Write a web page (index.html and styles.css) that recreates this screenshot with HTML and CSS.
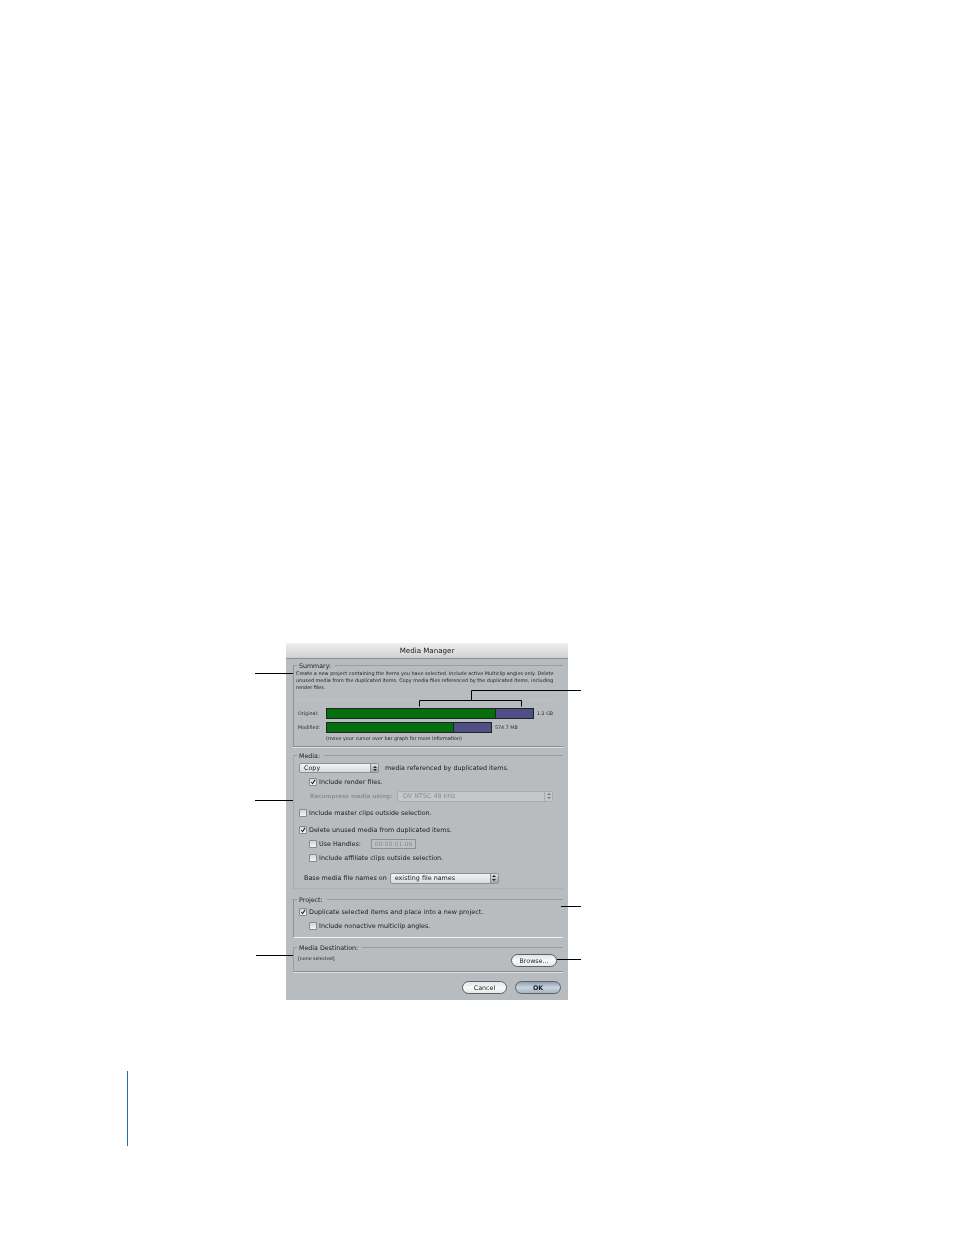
FILE: index.html
```html
<!DOCTYPE html>
<html lang="en">
<head>
<meta charset="utf-8">
<title>Media Manager</title>
<link rel="stylesheet" href="styles.css">
</head>
<body>
<main class="page">
  <section class="dialog">
    <header class="titlebar">Media Manager</header>

    <div class="group group-summary">
      <div class="head"><span class="head-label">Summary:</span></div>
      <p class="summary-text">Create a new project containing the items you have selected. Include active Multiclip angles only. Delete unused media from the duplicated items. Copy media files referenced by the duplicated items, including render files.</p>
      <div class="sep"></div>
      <div class="bar-row bar-row-first">
        <span class="bar-label">Original:</span>
        <div class="bar bar-original"><div class="bar-green" style="width:81.5%"></div><div class="bar-blue"></div></div>
        <span class="bar-value">1.2 GB</span>
      </div>
      <div class="bar-row">
        <span class="bar-label">Modified:</span>
        <div class="bar bar-modified"><div class="bar-green" style="width:77%"></div><div class="bar-blue"></div></div>
        <span class="bar-value">574.7 MB</span>
      </div>
      <p class="hint">(move your cursor over bar graph for more information)</p>
    </div>

    <div class="group group-media">
      <div class="head"><span class="head-label">Media:</span></div>
      <div class="row row-copy">
        <div class="select select-copy"><span>Copy</span><i class="arrows"></i></div>
        <span class="row-text">media referenced by duplicated items.</span>
      </div>
      <label class="row row-sub"><i class="box"><svg viewBox="0 0 7 7"><path d="M1.5 3.5 L3 5.5 L5.8 1"/></svg></i>Include render files.</label>
      <div class="row row-sub row-off">
        <span class="off-text">Recompress media using:</span>
        <div class="select select-off"><span>DV NTSC 48 kHz</span><i class="arrows"></i></div>
      </div>
      <label class="row row-top row-gap"><i class="box"></i>Include master clips outside selection.</label>
      <label class="row row-top row-gap"><i class="box"><svg viewBox="0 0 7 7"><path d="M1.5 3.5 L3 5.5 L5.8 1"/></svg></i>Delete unused media from duplicated items.</label>
      <div class="row row-sub">
        <i class="box"></i><span class="handles-text">Use Handles:</span>
        <span class="timecode">00:00:01:06</span>
      </div>
      <label class="row row-sub"><i class="box"></i>Include affiliate clips outside selection.</label>
      <div class="row row-base">
        <span class="base-text">Base media file names on</span>
        <div class="select select-base"><span>existing file names</span><i class="arrows"></i></div>
      </div>
    </div>

    <div class="group group-project">
      <div class="head"><span class="head-label">Project:</span></div>
      <label class="row row-top row-dup"><i class="box"><svg viewBox="0 0 7 7"><path d="M1.5 3.5 L3 5.5 L5.8 1"/></svg></i>Duplicate selected items and place into a new project.</label>
      <label class="row row-sub"><i class="box"></i>Include nonactive multiclip angles.</label>
    </div>

    <div class="group group-dest">
      <div class="head"><span class="head-label">Media Destination:</span></div>
      <div class="dest-row">
        <span class="none-text">[none selected]</span>
        <button class="btn btn-browse" type="button">Browse...</button>
      </div>
    </div>

    <footer class="actions">
      <button class="btn btn-cancel" type="button">Cancel</button>
      <button class="btn btn-ok" type="button">OK</button>
    </footer>
  </section>

  <svg class="callouts" viewBox="0 0 954 1235" aria-hidden="true">
    <path d="M255 673.5H293"/>
    <path d="M255 800.5H293"/>
    <path d="M256 955.5H293"/>
    <path d="M561 906.5H581"/>
    <path d="M557 959.5H581"/>
    <path d="M581 690.5H471.5V700.5M419.5 706.5V700.5H521.5V706.5"/>
  </svg>

  <div class="margin-rule"></div>
</main>
</body>
</html>
```

FILE: styles.css
```css
html, body { margin: 0; padding: 0; background: #fff; }
.page { position: relative; width: 954px; height: 1235px; overflow: hidden; font-family: "DejaVu Sans", sans-serif; color: #1a1a1a; }
.dialog { position: absolute; left: 286px; top: 643px; width: 282px; height: 357px; box-sizing: border-box; background: #b9bcbf; border-radius: 4px 4px 0 0; filter: blur(0.35px); font-size: 6.4px; line-height: 8px; }
.titlebar { height: 13px; padding-top: 2px; box-sizing: content-box; text-align: center; font-size: 7.1px; line-height: 11px; color: #1a1a1a; background: linear-gradient(#efefef, #cfd0d2); border-bottom: 1px solid #8d8f92; border-radius: 4px 4px 0 0; }
.group { margin-left: 7px; width: 270px; box-sizing: border-box; border-left: 1px solid #8d9094; border-bottom: 1px solid #888b8f; box-shadow: 0 1px 0 #dfe1e3; }
.head { height: 0; display: flex; align-items: center; }
.head::before { content: ""; width: 3px; height: 1px; background: #999ca0; }
.head::after { content: ""; flex: 1; height: 1px; background: #999ca0; margin-left: 4px; }
.head-label { padding: 2px 0 0 2px; font-size: 6.3px; line-height: 8px; white-space: nowrap; }
.group-summary { margin-top: 6px; height: 82px; }
.group-media { margin-top: 8px; height: 134px; border-bottom-color: #adb0b3; box-shadow: none; border-left-color: #a5a8ab; }
.group-project { margin-top: 10px; height: 39px; border-bottom-color: #eef0f1; box-shadow: none; }
.group-dest { margin-top: 9px; height: 25px; border-left-color: #9a9da0; }
.summary-text { margin: 5px 0 0 2px; width: 262px; font-size: 4.92px; line-height: 7px; }
.sep { height: 1px; margin: 9px 6px 0 2px; background: #bfc2c5; }
.bar-row { display: flex; align-items: center; height: 11px; margin-top: 3px; font-size: 4.8px; }
.bar-row-first { margin-top: 7px; }
.bar-label { width: 31px; padding-left: 4px; box-sizing: border-box; color: #2a2a2a; }
.bar { display: flex; height: 11px; margin-left: 1px; box-sizing: border-box; border: 1.4px solid #1c2426; }
.bar-original { width: 208px; }
.bar-modified { width: 166px; }
.bar-green { background: #066e0c; border-right: 1px solid #0f3316; }
.bar-blue { flex: 1; background: #4e4f82; }
.bar-value { margin-left: 3px; white-space: nowrap; color: #2a2a2a; }
.hint { margin: 2px 0 0 32px; font-size: 4.85px; line-height: 7px; }
.row { display: flex; align-items: center; height: 14px; white-space: nowrap; }
.row-copy { margin-top: 6px; padding-left: 5px; }
.row-text { margin-left: 6px; }
.row-sub { padding-left: 16px; }
.row-top { padding-left: 6px; }
.row-gap { margin-top: 3px; }
.row-off { color: #8d8f92; }
.row-base { margin-top: 6px; padding-left: 10px; }
.row-dup { margin-top: 6px; }
.box { display: block; flex: none; width: 6px; height: 6px; margin: 0 2px 0 -1px; background: linear-gradient(#d2d4d6, #f4f4f4); border: 1px solid #87898c; border-radius: 1px; box-sizing: content-box; }
.box svg { display: block; width: 6px; height: 6px; }
.box path { fill: none; stroke: #1a1a1a; stroke-width: 1.2; }
.select { position: relative; display: flex; align-items: center; height: 10px; box-sizing: border-box; padding-left: 4px; background: linear-gradient(#f3f3f3, #d9dadb); border: 1px solid #8d8f92; border-radius: 2px; color: #1a1a1a; }
.select-copy { width: 80px; }
.select-off { width: 156px; height: 11px; margin-left: 4px; padding-left: 5px; color: #8d8f92; background: #c4c6c8; border-color: #a9abae; }
.select-base { width: 109px; height: 11px; margin-left: 3px; }
.arrows { position: absolute; right: 0; top: 0; bottom: 0; width: 7px; background: linear-gradient(#dfe0e2, #9fa2a8); border-left: 1px solid #8d8f92; }
.arrows::before, .arrows::after { content: ""; position: absolute; left: 1.5px; border-left: 2px solid transparent; border-right: 2px solid transparent; }
.arrows::before { top: 1.5px; border-bottom: 2.5px solid #222; }
.arrows::after { bottom: 1.5px; border-top: 2.5px solid #222; }
.select-off .arrows { background: #c4c6c8; border-left-color: #a9abae; }
.select-off .arrows::before { border-bottom-color: #777; }
.select-off .arrows::after { border-top-color: #777; }
.off-text { width: 83px; font-size: 5.7px; font-weight: bold; color: #8f9194; }
.handles-text { width: 52px; }
.timecode { width: 45px; height: 10px; box-sizing: border-box; border: 1px solid #8d8f92; background: #bfc1c3; color: #8a8c8f; font-size: 6.2px; line-height: 8px; text-align: center; }
.dest-row { display: flex; justify-content: space-between; align-items: flex-start; padding: 6px 6px 0 4px; }
.none-text { font-size: 4.7px; line-height: 7px; margin-top: 2px; }
.btn { display: block; padding: 0; box-sizing: border-box; font-family: inherit; font-size: 6.3px; line-height: 8px; color: #1a1a1a; border: 1px solid #5e6063; border-radius: 7px; background: linear-gradient(#e2e3e4 0%, #fafafa 55%, #e6e7e8 100%); text-align: center; }
.btn-browse { width: 46px; height: 13px; margin-top: 1px; }
.actions { display: flex; justify-content: flex-end; gap: 8px; padding: 9px 7px 0 0; }
.btn-cancel { width: 45px; height: 13px; }
.btn-ok { width: 46px; height: 13px; background: linear-gradient(#8fa0b4 0%, #c9d3de 50%, #a6b4c4 100%); font-weight: bold; }
.callouts { position: absolute; left: 0; top: 0; width: 954px; height: 1235px; pointer-events: none; }
.callouts path { fill: none; stroke: #000; stroke-width: 1; }
.margin-rule { position: absolute; left: 127px; top: 1071px; width: 1px; height: 75px; background: #2a6ca8; }
```
